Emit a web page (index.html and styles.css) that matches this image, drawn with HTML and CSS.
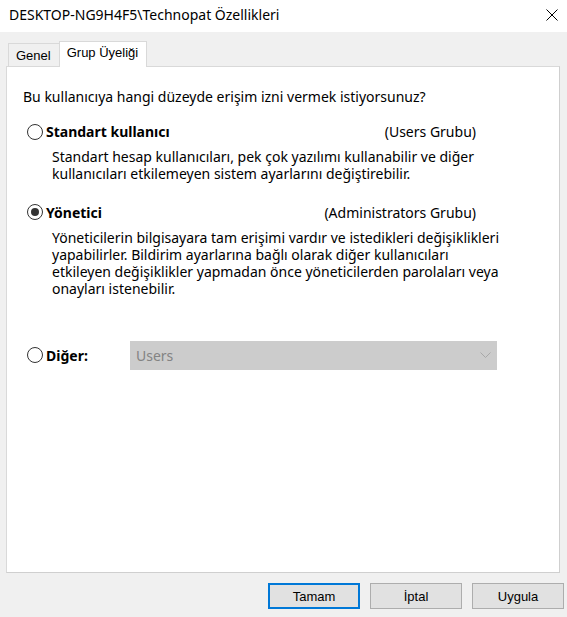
FILE: index.html
```html
<!DOCTYPE html>
<html lang="tr">
<head>
<meta charset="utf-8">
<link rel="stylesheet" href="styles.css">
</head>
<body>
<div class="window">
  <div class="titlebar">
    <span class="title">DESKTOP-NG9H4F5\Technopat Özellikleri</span>
    <svg class="close" width="12" height="12" viewBox="0 0 12 12"><path d="M0.5 0.5 L11.5 11.5 M11.5 0.5 L0.5 11.5" stroke="#000" stroke-width="1" fill="none"/></svg>
  </div>
  <div class="body">
    <div class="tabs">
      <div class="tab">Genel</div>
      <div class="tab active">Grup Üyeliği</div>
    </div>
    <div class="panel">
      <p class="question">Bu kullanıcıya hangi düzeyde erişim izni vermek istiyorsunuz?</p>
      <div class="option">
        <div class="opt-head">
          <span class="radio"></span>
          <span class="opt-label">Standart kullanıcı</span>
          <span class="group">(Users Grubu)</span>
        </div>
        <p class="desc">Standart hesap kullanıcıları, pek çok yazılımı kullanabilir ve diğer<br>kullanıcıları etkilemeyen sistem ayarlarını değiştirebilir.</p>
      </div>
      <div class="option">
        <div class="opt-head">
          <span class="radio checked"></span>
          <span class="opt-label">Yönetici</span>
          <span class="group">(Administrators Grubu)</span>
        </div>
        <p class="desc">Yöneticilerin bilgisayara tam erişimi vardır ve istedikleri değişiklikleri<br>yapabilirler. Bildirim ayarlarına bağlı olarak diğer kullanıcıları<br>etkileyen değişiklikler yapmadan önce yöneticilerden parolaları veya<br>onayları istenebilir.</p>
      </div>
      <div class="other">
        <span class="radio"></span>
        <span class="opt-label other-label">Diğer:</span>
        <div class="combo">
          <span>Users</span>
          <svg width="11" height="6" viewBox="0 0 11 6"><path d="M0.5 0.5 L5.5 5.5 L10.5 0.5" stroke="#a8a8a8" stroke-width="1" fill="none"/></svg>
        </div>
      </div>
    </div>
    <div class="buttons">
      <button class="btn default">Tamam</button>
      <button class="btn">İptal</button>
      <button class="btn">Uygula</button>
    </div>
  </div>
</div>
</body>
</html>
```
FILE: styles.css
```css
* { box-sizing: border-box; }
html, body { margin: 0; padding: 0; }
body {
  width: 567px;
  height: 617px;
  overflow: hidden;
  font-family: "Noto Sans", "Open Sans", sans-serif;
  font-size: 14px;
  color: #000;
  background: #f0f0f0;
}
.window { width: 567px; height: 617px; display: flex; flex-direction: column; }
.titlebar {
  height: 32px;
  background: #fff;
  display: flex;
  align-items: center;
  justify-content: space-between;
  padding: 0 9px 3px 9px;
}
.title { font-size: 14px; line-height: 17px; }
.close { display: block; }
.body { flex: 1; display: flex; flex-direction: column; padding: 10px 3px 0 6px; }
.tabs { display: flex; align-items: flex-end; height: 24px; padding-left: 2px; }
.tab {
  height: 23px;
  padding: 0 8px 0 7px;
  border: 1px solid #d9d9d9;
  border-bottom: none;
  border-right: none;
  background: #f0f0f0;
  font-family: "Liberation Sans", Arial, sans-serif;
  font-size: 13px;
  line-height: 24px;
}
.tab.active {
  height: 26px;
  background: #fff;
  border-right: 1px solid #d9d9d9;
  margin-bottom: -1px;
  position: relative;
  z-index: 1;
  padding: 0 8px 0 7px;
  line-height: 22px;
}
.panel {
  height: 507px;
  margin-right: 4px;
  background: #fff;
  border: 1px solid #d9d9d9;
  border-right-color: #cfcfcf;
  border-bottom-color: #cfcfcf;
  padding: 21px 0 0 16px;
}
.question { margin: 0 0 18px 0; line-height: 17px; }
.option { margin-bottom: 21px; }
.opt-head { display: flex; align-items: center; height: 17px; }
.radio {
  width: 16px; height: 16px;
  border: 1px solid #333;
  border-radius: 50%;
  background: #fff;
  margin: 0 3px 0 4px;
  display: inline-flex;
  align-items: center;
  justify-content: center;
  flex: none;
}
.radio.checked::after {
  content: "";
  width: 8px; height: 8px;
  border-radius: 50%;
  background: #333;
}
.opt-label { font-weight: bold; }
.group { margin-left: auto; margin-right: 83px; }
.desc { margin: 8px 0 0 29px; line-height: 17.3px; }
.other { display: flex; align-items: center; margin-top: 43px; }
.other-label { width: 84px; }
.combo {
  width: 367px;
  height: 29px;
  background: #cccccc;
  display: flex;
  align-items: center;
  justify-content: space-between;
  padding: 0 6px 0 6px;
  color: #838383;
}
.buttons { display: flex; justify-content: flex-end; gap: 10px; padding: 10px 0 0 0; }
.btn {
  width: 92px;
  height: 26px;
  font-family: "Liberation Sans", Arial, sans-serif;
  font-size: 13px;
  background: #e1e1e1;
  border: 1px solid #adadad;
  padding: 0;
  color: #000;
}
.btn.default { border: 2px solid #0078d7; }
```
